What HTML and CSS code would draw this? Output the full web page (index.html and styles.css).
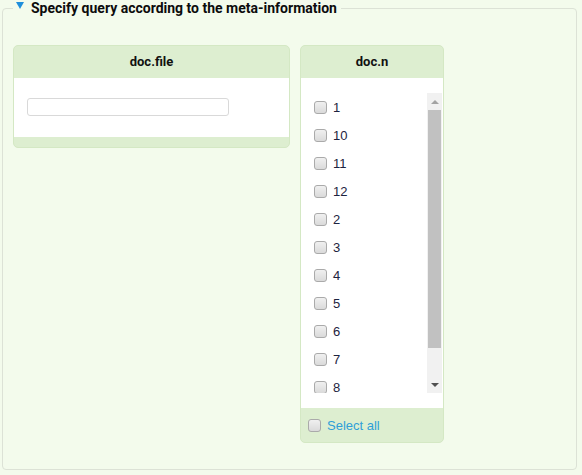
FILE: index.html
```html
<!DOCTYPE html>
<html>
<head>
<meta charset="utf-8">
<link rel="stylesheet" href="styles.css">
</head>
<body>
<div class="page">
<fieldset class="meta">
  <legend class="meta-legend"><span class="tri"></span>Specify query according to the meta-information</legend>
  <div class="panels">
    <div class="panel panel-file">
      <div class="panel-head">doc.file</div>
      <div class="panel-body file-body">
        <input class="text-input" type="text">
      </div>
      <div class="panel-foot foot-thin"></div>
    </div>
    <div class="panel panel-n">
      <div class="panel-head">doc.n</div>
      <div class="panel-body n-body">
        <div class="listbox">
          <div class="list-view">
            <ul class="list">
              <li class="item"><input type="checkbox" class="cb"><span class="val">1</span></li>
              <li class="item"><input type="checkbox" class="cb"><span class="val">10</span></li>
              <li class="item"><input type="checkbox" class="cb"><span class="val">11</span></li>
              <li class="item"><input type="checkbox" class="cb"><span class="val">12</span></li>
              <li class="item"><input type="checkbox" class="cb"><span class="val">2</span></li>
              <li class="item"><input type="checkbox" class="cb"><span class="val">3</span></li>
              <li class="item"><input type="checkbox" class="cb"><span class="val">4</span></li>
              <li class="item"><input type="checkbox" class="cb"><span class="val">5</span></li>
              <li class="item"><input type="checkbox" class="cb"><span class="val">6</span></li>
              <li class="item"><input type="checkbox" class="cb"><span class="val">7</span></li>
              <li class="item"><input type="checkbox" class="cb"><span class="val">8</span></li>
              <li class="item"><input type="checkbox" class="cb"><span class="val">9</span></li>
            </ul>
          </div>
          <div class="scrollbar">
            <div class="arrow arrow-up"></div>
            <div class="track"><div class="thumb"></div></div>
            <div class="arrow arrow-down"></div>
          </div>
        </div>
      </div>
      <div class="panel-foot foot-select">
        <input type="checkbox" class="cb"><span class="select-all">Select all</span>
      </div>
    </div>
  </div>
</fieldset>
</div>
</body>
</html>
```
FILE: styles.css
```css
html, body {
  margin: 0;
  padding: 0;
  background: #f3fbec;
}
.page {
  width: 582px;
  height: 475px;
  padding: 0 5px 0 2px;
  box-sizing: border-box;
  font-family: Roboto, "Liberation Sans", sans-serif;
  color: #111;
}
.meta {
  margin: 0;
  border: 1px solid #dce2d6;
  border-radius: 4px;
  padding: 29px 10px 0 10px;
  height: 470px;
  box-sizing: border-box;
}
.meta-legend {
  padding: 0 4px 0 3px;
  font-size: 14px;
  font-weight: bold;
  line-height: 16px;
  display: flex;
  align-items: center;
  gap: 7px;
  color: #0c0c0c;
}
.tri {
  width: 0;
  height: 0;
  border-left: 4.5px solid transparent;
  border-right: 4.5px solid transparent;
  border-top: 7px solid #1f8fdc;
  margin-top: -6px;
}
.panels {
  display: flex;
  align-items: flex-start;
  gap: 10px;
}
.panel {
  border: 1px solid #d4e8c4;
  border-radius: 5px;
  background: #ddeed0;
  overflow: hidden;
  box-sizing: border-box;
  display: flex;
  flex-direction: column;
}
.panel-file { width: 277px; }
.panel-n { width: 144px; }
.panel-head {
  height: 32px;
  line-height: 32px;
  text-align: center;
  font-size: 13px;
  font-weight: bold;
  color: #111;
}
.panel-body {
  background: #fff;
}
.file-body {
  height: 59px;
  padding: 20px 0 0 13px;
  box-sizing: border-box;
}
.text-input {
  display: block;
  width: 202px;
  height: 18px;
  box-sizing: border-box;
  border: 1px solid #d9d9d9;
  border-radius: 3px;
  margin: 0;
  padding: 0;
  background: #fff;
}
.foot-thin { height: 10px; }
.n-body {
  height: 330px;
  padding: 15px 1px 15px 0;
  box-sizing: border-box;
}
.listbox {
  display: flex;
  height: 300px;
}
.list-view {
  flex: 1;
  overflow: hidden;
}
.list {
  list-style: none;
  margin: 0;
  padding: 0;
}
.item {
  height: 28px;
  display: flex;
  align-items: center;
  padding-left: 13px;
  font-family: "Liberation Sans", Arial, sans-serif;
  font-size: 13px;
  color: #1d2340;
}
.cb {
  -webkit-appearance: none;
  appearance: none;
  width: 13px;
  height: 13px;
  margin: 0;
  border: 1px solid #aaa;
  border-radius: 3px;
  background: linear-gradient(#f0f0f0, #dadada);
  box-sizing: border-box;
  flex: none;
}
.val { margin-left: 6px; }
.scrollbar {
  width: 15px;
  background: #f1f1f1;
  display: flex;
  flex-direction: column;
}
.arrow {
  height: 17px;
  display: flex;
  justify-content: center;
  align-items: center;
}
.arrow-up::before {
  content: "";
  border-left: 4px solid transparent;
  border-right: 4px solid transparent;
  border-bottom: 4px solid #a3a3a3;
}
.arrow-down::before {
  content: "";
  border-left: 4px solid transparent;
  border-right: 4px solid transparent;
  border-top: 4px solid #505050;
}
.track {
  flex: 1;
  padding: 0 1px 0 1px;
}
.thumb {
  height: 238px;
  background: #c1c1c1;
}
.foot-select {
  height: 34px;
  display: flex;
  align-items: center;
  padding-left: 7px;
  padding-top: 1px;
  box-sizing: border-box;
  font-family: "Liberation Sans", Arial, sans-serif;
  font-size: 13px;
  line-height: 16px;
}
.select-all {
  margin-left: 6px;
  color: #2f9fd8;
}
```
